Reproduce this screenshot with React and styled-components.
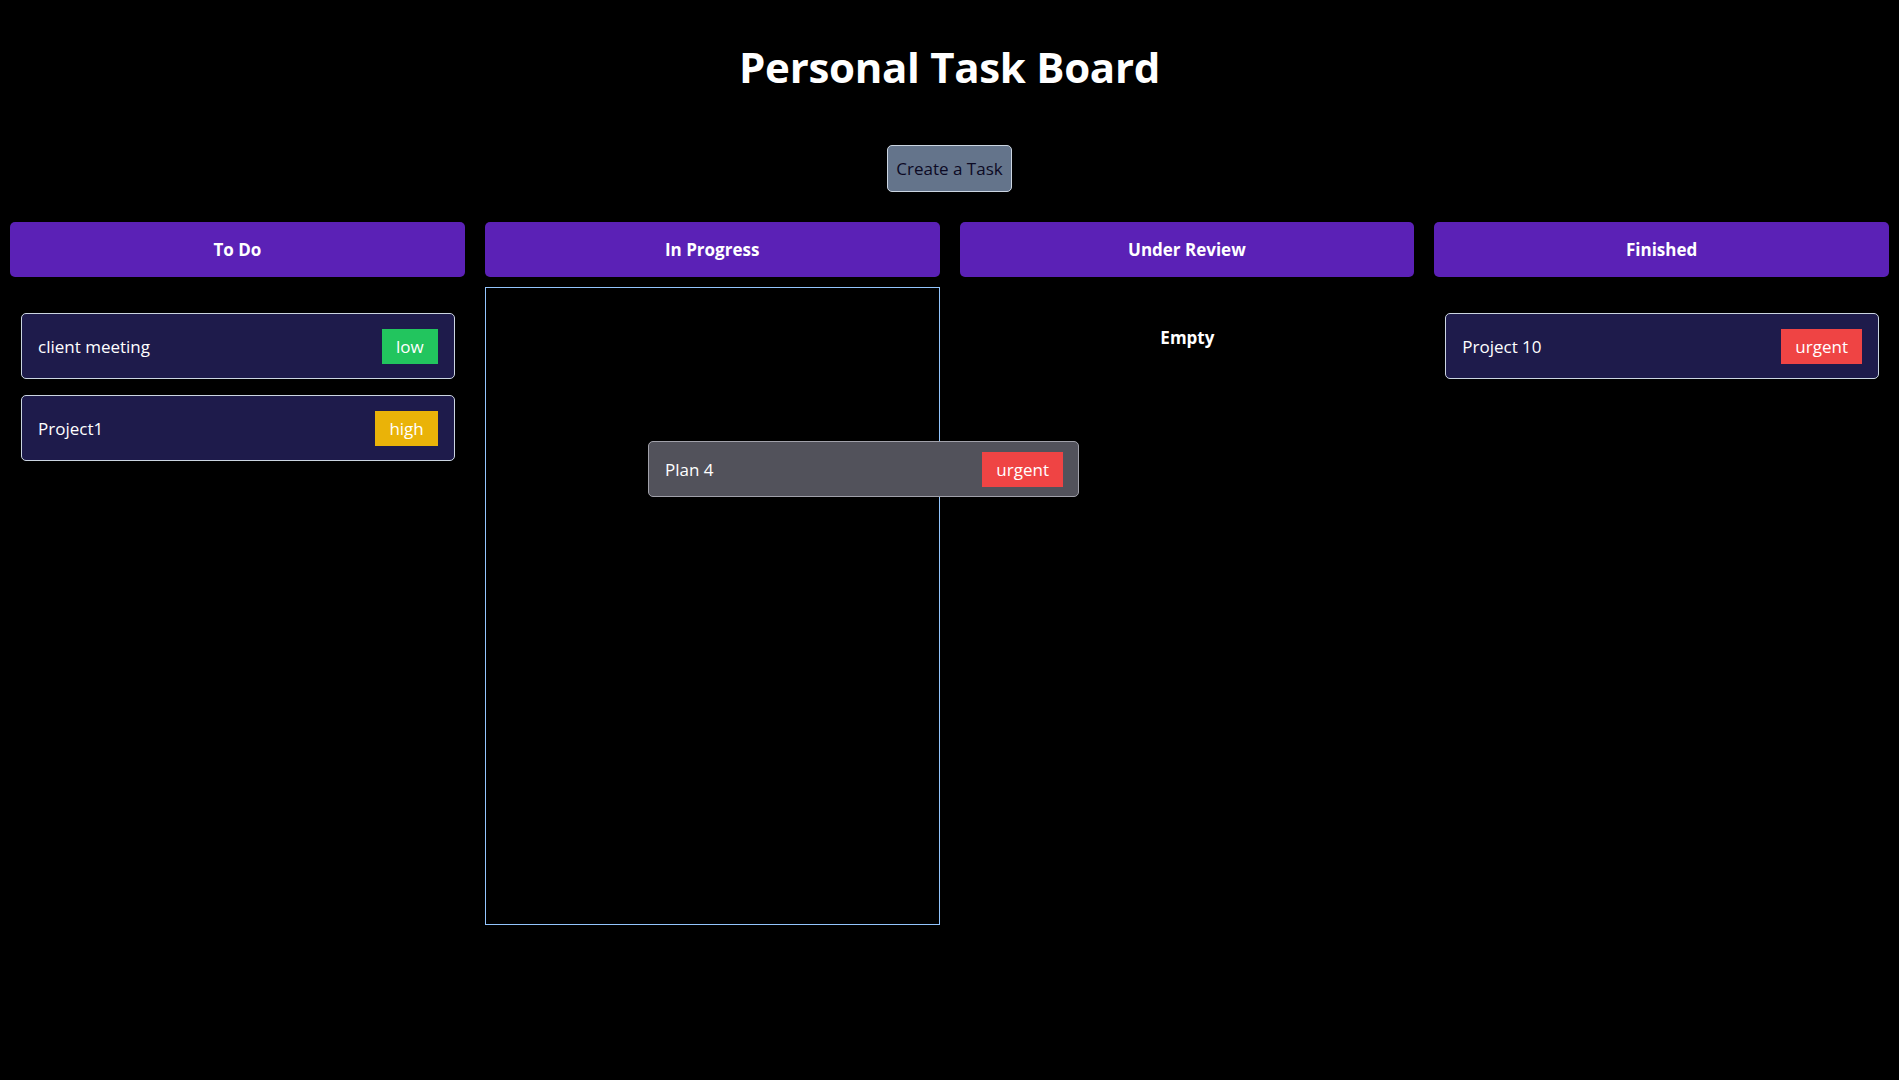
import styled, { createGlobalStyle } from 'styled-components';

const GlobalStyle = createGlobalStyle`
  html, body {
    margin: 0;
    padding: 0;
    background: #000;
    font-family: 'Open Sans', 'Noto Sans', sans-serif;
    color: #fff;
  }
`;

const columns = [
  {
    title: 'To Do',
    tasks: [
      { name: 'client meeting', priority: 'low' },
      { name: 'Project1', priority: 'high' },
    ],
  },
  { title: 'In Progress', tasks: [], over: true },
  { title: 'Under Review', tasks: [] },
  {
    title: 'Finished',
    tasks: [{ name: 'Project 10', priority: 'urgent' }],
  },
];

const badgeColors = {
  low: '#22c55e',
  high: '#eab308',
  urgent: '#ef4444',
};

const App = () => {
  return (
    <Page>
      <GlobalStyle />
      <Title>Personal Task Board</Title>
      <Toolbar>
        <CreateButton>Create a Task</CreateButton>
      </Toolbar>
      <Board>
        {columns.map((col) => (
          <Column key={col.title}>
            <ColumnHeader>{col.title}</ColumnHeader>
            <ColumnBody $over={col.over}>
              {col.tasks.length === 0 && !col.over && <Empty>Empty</Empty>}
              {col.tasks.map((t) => (
                <Card key={t.name}>
                  <CardName>{t.name}</CardName>
                  <Badge $color={badgeColors[t.priority]}>{t.priority}</Badge>
                </Card>
              ))}
            </ColumnBody>
          </Column>
        ))}
        {/* card being dragged over "In Progress" */}
        <DragCard>
          <CardName>Plan 4</CardName>
          <Badge $color={badgeColors.urgent}>urgent</Badge>
        </DragCard>
      </Board>
    </Page>
  );
};

const Page = styled.div`
  min-height: 1080px;
  background: #000;
`;

const Title = styled.h1`
  margin: 0;
  padding-top: 40px;
  text-align: center;
  font-size: 42px;
  line-height: 53px;
  font-weight: 700;
  letter-spacing: -0.3px;
`;

const Toolbar = styled.div`
  display: flex;
  justify-content: center;
  margin-top: 52px;
`;

const CreateButton = styled.button`
  height: 47px;
  padding: 0 8px;
  background: #64748b;
  color: #0c0a24;
  border: 1px solid #cbd5e1;
  border-radius: 5px;
  font-family: 'Open Sans', 'Noto Sans', sans-serif;
  font-size: 17px;
`;

const Board = styled.div`
  position: relative;
  display: grid;
  grid-template-columns: repeat(4, 1fr);
  gap: 20px;
  padding: 0 10px;
  margin-top: 30px;
`;

const Column = styled.div`
  display: flex;
  flex-direction: column;
`;

const ColumnHeader = styled.div`
  height: 55px;
  display: flex;
  align-items: center;
  justify-content: center;
  background: #5b21b6;
  border-radius: 5px;
  font-size: 17px;
  font-weight: 700;
`;

const ColumnBody = styled.div`
  margin-top: 10px;
  padding: 25px 9px 25px 10px;
  display: flex;
  flex-direction: column;
  gap: 16px;
  box-sizing: border-box;
  border: 1px solid ${(p) => (p.$over ? '#93c5fd' : 'transparent')};
  height: ${(p) => (p.$over ? '638px' : 'auto')};
`;

const Empty = styled.p`
  margin: 13px 0 0;
  text-align: center;
  font-weight: 700;
  font-size: 17px;
`;

const Card = styled.div`
  height: 66px;
  box-sizing: border-box;
  display: flex;
  align-items: center;
  justify-content: space-between;
  padding: 0 16px;
  background: #1e1b4b;
  border: 1px solid #cbd5e1;
  border-radius: 5px;
`;

const CardName = styled.span`
  font-size: 17px;
`;

const Badge = styled.span`
  height: 35px;
  display: flex;
  align-items: center;
  padding: 0 14px;
  background: ${(p) => p.$color};
  font-size: 17px;
`;

const DragCard = styled.div`
  position: absolute;
  left: 648px;
  top: 219px;
  width: 431px;
  height: 56px;
  box-sizing: border-box;
  display: flex;
  align-items: center;
  justify-content: space-between;
  padding: 0 15px 0 16px;
  background: #52525b;
  border: 1px solid #a1a1aa;
  border-radius: 5px;
`;

export default App;
